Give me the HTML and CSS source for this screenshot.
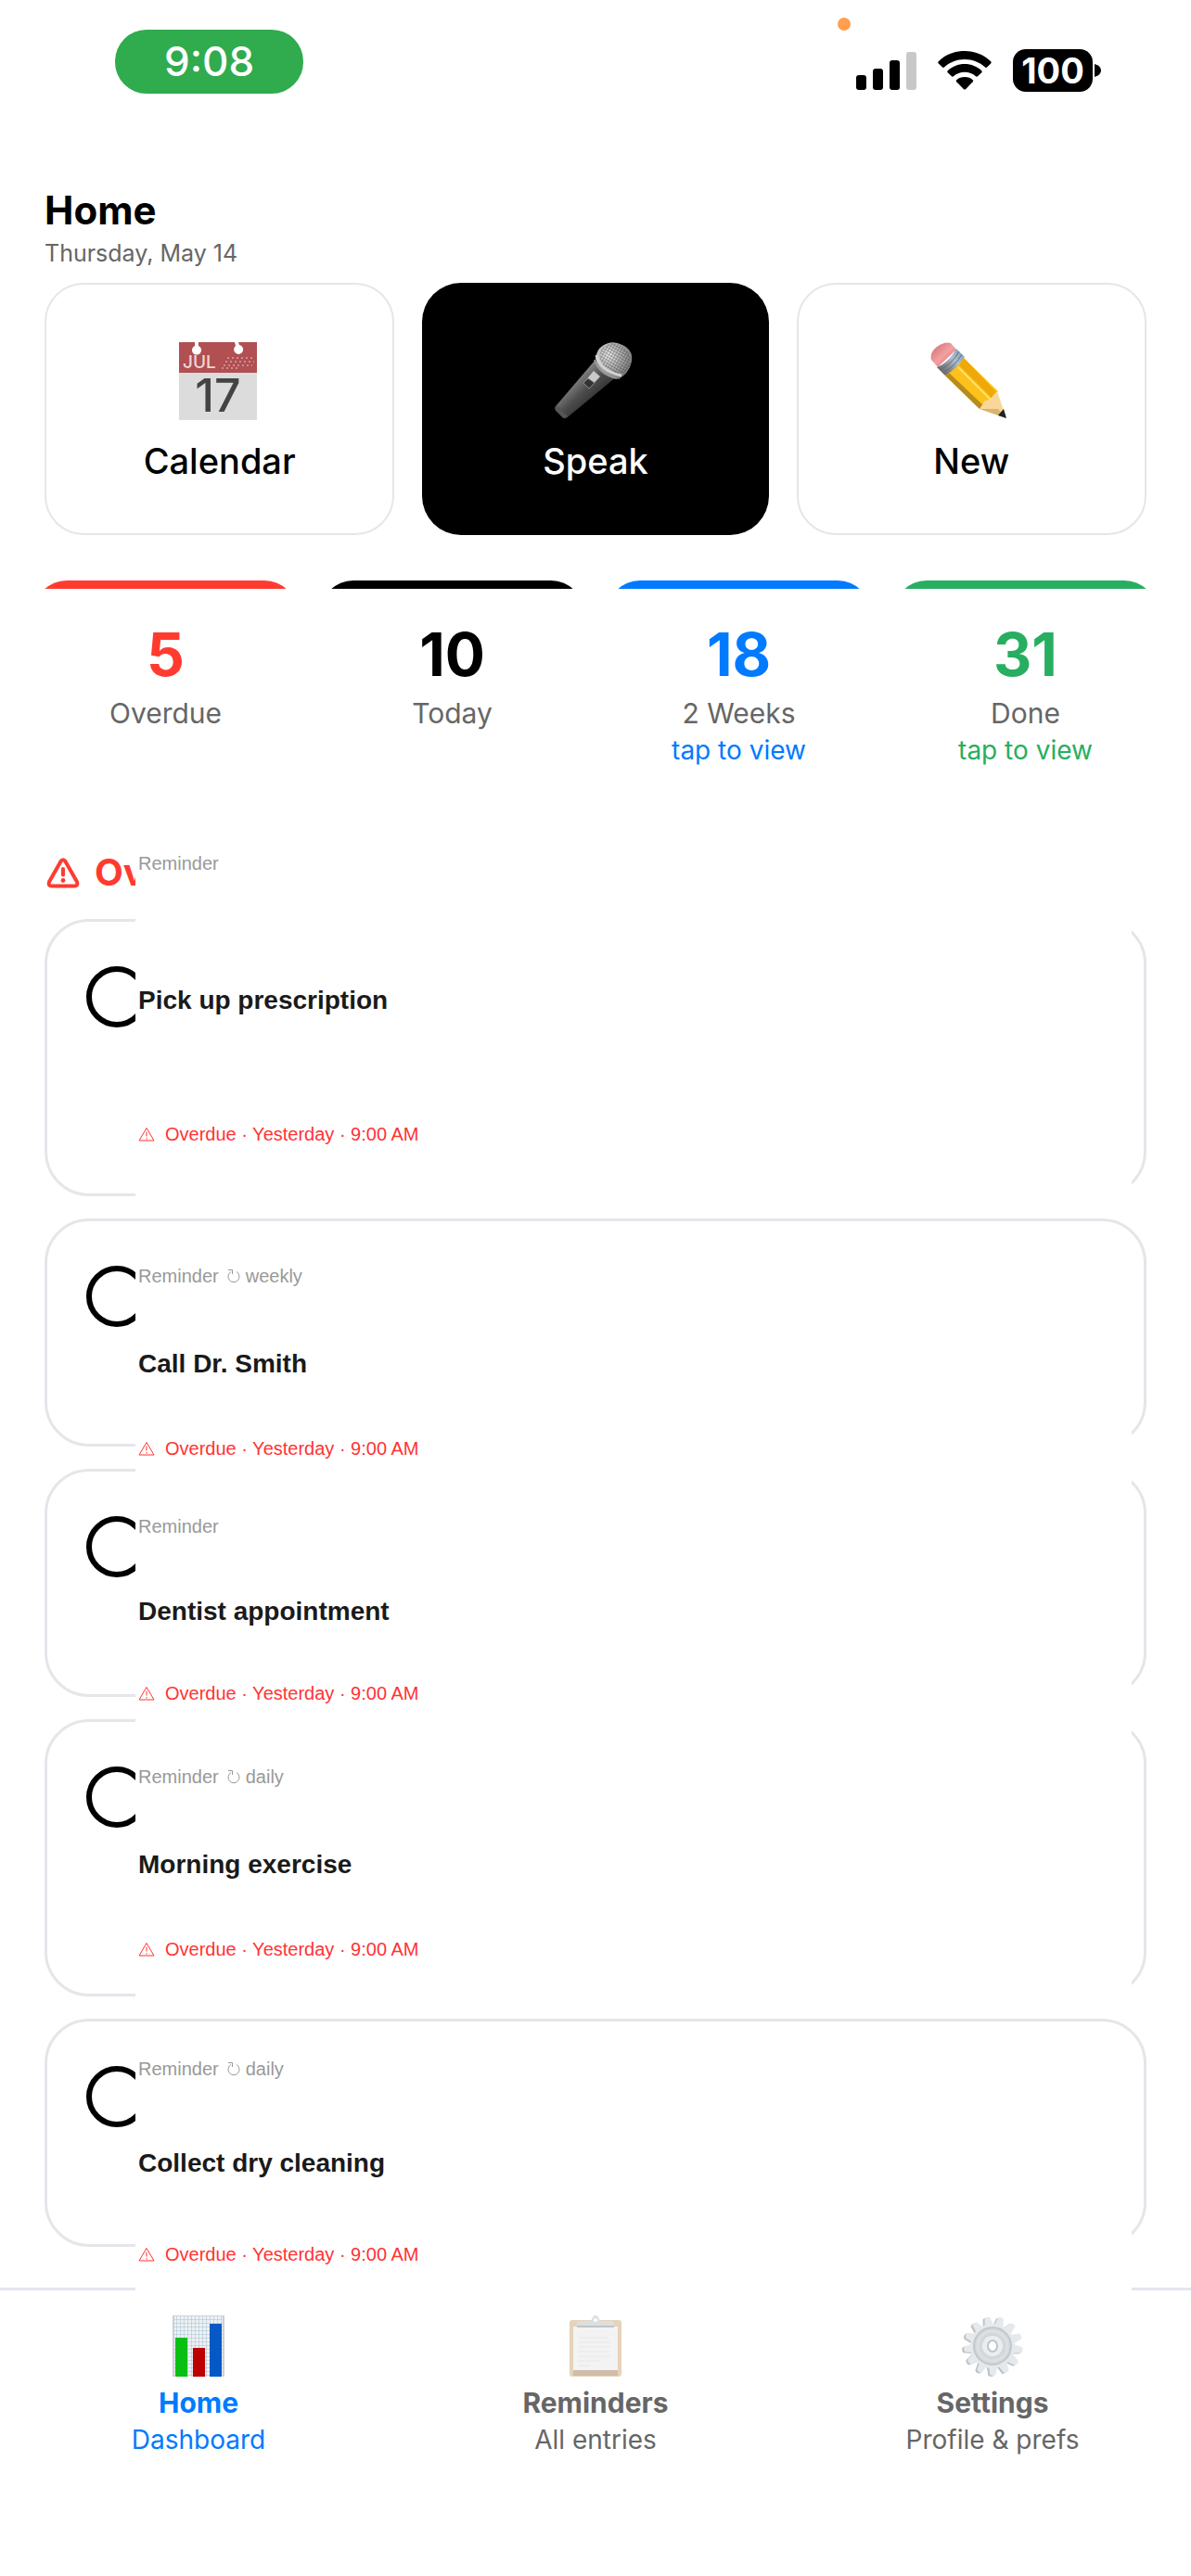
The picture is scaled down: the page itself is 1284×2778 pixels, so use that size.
FILE: index.html
```html
<!DOCTYPE html>
<html lang="en">
<head>
    <meta charset="UTF-8">
    <meta name="viewport" content="width=device-width, initial-scale=1.0">
    <title>Home</title>
    <link rel="stylesheet" href="styles.css">
</head>
<body>
    <header class="status-bar">
        <div class="clock">9:08</div>
        <div class="status-icons">
            <span class="mic-dot"></span>
            <svg width="65" height="42" viewBox="0 0 65 42">
                <rect x="0" y="26" width="11" height="16" rx="3"/>
                <rect x="18" y="19" width="11" height="23" rx="3"/>
                <rect x="36" y="10" width="11" height="32" rx="3"/>
                <rect x="54" y="1" width="11" height="41" rx="3" fill="#c8c8c8"/>
            </svg>
            <svg width="58" height="42" viewBox="0 0 58 42">
                <path d="M29 0C18 0 8 4 .8 11.200Q-.2 12.300.8 13.400L5 17.500Q6 18.400 7 17.500C13 12 20.500 9 29 9S45 12 51 17.500Q52 18.400 53 17.500L57.200 13.400Q58.200 12.300 57.200 11.200C50 4 40 0 29 0Z"/>
                <path d="M29 14C22 14 15.500 16.700 10.700 21.200Q9.700 22.200 10.700 23.200L15 27.300Q16 28.200 17 27.300C20.200 24.500 24.400 22.800 29 22.800S37.800 24.500 41 27.300Q42 28.200 43 27.300L47.300 23.200Q48.300 22.200 47.300 21.200C42.500 16.700 36 14 29 14Z"/>
                <path d="M29 28C25.500 28 22.500 29.200 20.300 31.200Q19.400 32.200 20.300 33.200L28 41.200Q29 42 30 41.200L37.700 33.200Q38.600 32.200 37.700 31.200C35.500 29.200 32.500 28 29 28Z"/>
            </svg>
            <div class="battery">
                <span class="battery-level">100</span>
                <svg width="7" height="14" viewBox="0 0 7 14"><path d="M0 0Q7 2 7 7T0 14Z"/></svg>
            </div>
        </div>
    </header>

    <main>
        <h1>Home</h1>
        <p class="date">Thursday, May 14</p>

        <div class="actions">
            <button class="action">
                <svg width="88" height="84" viewBox="0 0 88 84">
                    <rect width="84" height="84" fill="#dcdcdc"/>
                    <rect width="84" height="33" fill="#b14f52"/>
                    <path d="M17 0h4v4a5 5 0 1 1-4 0ZM60 0h4l1 3a5 5 0 1 1-4 1Z" fill="#fff"/>
                    <text x="4" y="28" class="cal-month">JUL</text>
                    <path d="M52 17h29M50 21h31M48 25h31M46 28h18" stroke="#d08c8e" stroke-width="2" stroke-dasharray="2 3"/>
                    <text x="42" y="75" text-anchor="middle" class="cal-day">17</text>
                </svg>
                <span>Calendar</span>
            </button>
            <button class="action action-primary">
                <svg width="88" height="84" viewBox="0 0 88 84">
                    <defs>
                        <linearGradient id="mic-body" x1="0" y1="0" x2="1" y2="1">
                            <stop offset="0.300" stop-color="#8a8a8a"/>
                            <stop offset="0.500" stop-color="#4c4c4c"/>
                            <stop offset="0.800" stop-color="#1e1e1e"/>
                        </linearGradient>
                        <radialGradient id="mic-head" cx="0.350" cy="0.350" r="0.700">
                            <stop offset="0" stop-color="#f0f0f0"/>
                            <stop offset="1" stop-color="#777"/>
                        </radialGradient>
                        <pattern id="mic-mesh" width="3" height="3" patternUnits="userSpaceOnUse" patternTransform="rotate(30)">
                            <path d="M0 0h3M0 0v3" stroke="#333" stroke-width="1"/>
                        </pattern>
                    </defs>
                    <path d="M43 20 67 37 15 80Q11 84 8 81L1 73Q-1 71 2 68Z" fill="url(#mic-body)"/>
                    <path d="M2 68 14 80 10 82 1 74Z" fill="#555"/>
                    <path d="M48 7Q59-4 73 3T82 24Q80 33 69 40Q48 34 44 18Q45 11 48 7Z" fill="url(#mic-head)"/>
                    <path d="M50 8Q60-3 72 4T81 23Q80 31 70 37Q52 30 48 16Z" fill="url(#mic-mesh)" opacity="0.700"/>
                    <path d="M45 14Q49 31 72 36" fill="none" stroke="#d2d2d2" stroke-width="3"/>
                    <path d="M43 19Q48 35 67 39" fill="none" stroke="#999" stroke-width="2"/>
                    <path d="M42 31 49 37 37 50 31 44Z" fill="#c9c9c9"/>
                    <path d="M36 39 43 44 37 50 31 44Z" fill="#333" stroke="#888"/>
                </svg>
                <span>Speak</span>
            </button>
            <button class="action">
                <svg width="88" height="84" viewBox="0 0 88 84">
                    <defs>
                        <linearGradient id="pencil-metal" x1="0" y1="1" x2="1" y2="0">
                            <stop offset="0" stop-color="#4b4e54"/>
                            <stop offset="0.400" stop-color="#8e939a"/>
                            <stop offset="0.600" stop-color="#a9c0d6"/>
                            <stop offset="1" stop-color="#7c93aa"/>
                        </linearGradient>
                        <linearGradient id="pencil-rubber" x1="0" y1="0" x2="1" y2="1">
                            <stop offset="0" stop-color="#c9686c"/>
                            <stop offset="0.500" stop-color="#f3a0a2"/>
                            <stop offset="1" stop-color="#d4686e"/>
                        </linearGradient>
                    </defs>
                    <path d="M8 27 1 19Q-1 11 7 5T22 1L28 8Z" fill="url(#pencil-rubber)"/>
                    <path d="M7 27Q20 22 28 7L37 16Q30 29 16 36Z" fill="url(#pencil-metal)"/>
                    <path d="M10 30Q23 24 31 10M13 33Q26 27 34 13" fill="none" stroke="#666c74"/>
                    <path d="M16 36Q29 28 36 17L73 53 60 66 53 72Z" fill="#fcc21b"/>
                    <path d="M31 25 66 60 71 54 36 17Z" fill="#f0a808"/>
                    <path d="M30 27 65 62" stroke="#ffe26a" stroke-width="2"/>
                    <path d="M16 36 20 33 58 69 53 72Z" fill="#b98a1c"/>
                    <path d="M53 72 59 63 65 62 68 57 72 53 82 82Z" fill="#f9d79a"/>
                    <path d="M53 72 82 82 73 72Z" fill="#d9b274"/>
                    <path d="M79 72 82 82 73 79Z" fill="#222"/>
                </svg>
                <span>New</span>
            </button>
        </div>

        <div class="summary">
            <a href="#overdue" class="stat stat-red">
                <strong>5</strong>
                <span class="stat-label">Overdue</span>
            </a>
            <a href="#today" class="stat stat-black">
                <strong>10</strong>
                <span class="stat-label">Today</span>
            </a>
            <a href="#weeks" class="stat stat-blue">
                <strong>18</strong>
                <span class="stat-label">2 Weeks</span>
                <span class="stat-hint">tap to view</span>
            </a>
            <a href="#done" class="stat stat-green">
                <strong>31</strong>
                <span class="stat-label">Done</span>
                <span class="stat-hint">tap to view</span>
            </a>
        </div>

        <svg class="symbols" width="0" height="0">
            <symbol id="warning" viewBox="0 0 18 16">
                <path d="M9 1.500 17 15H1ZM9 5.500v5M9 12v1.500" fill="none" stroke="currentColor"/>
            </symbol>
            <symbol id="repeat" viewBox="0 0 14 16">
                <path d="M4 3.500A6 6 0 1 0 10 3.500M1 1.500H5.500V6" fill="none" stroke="currentColor"/>
            </symbol>
        </svg>

        <h2 id="overdue">
            <svg width="36" height="33" viewBox="0 0 36 33">
                <path d="M15.500 4Q18 .5 20.500 4L33 26Q34.500 30.500 30 30.500H6Q1.500 30.500 3 26Z" fill="none" stroke="currentColor" stroke-width="4" stroke-linejoin="round"/>
                <path d="M18 12v6.500" stroke="currentColor" stroke-width="4" stroke-linecap="round"/>
                <circle cx="18" cy="24.500" r="2.400" fill="currentColor"/>
            </svg>
            Overdue
        </h2>

        <ul class="cards">
            <li class="card card-tall">
                <input type="checkbox" id="task-1" class="check">
                <div class="details details-raised">
                    <p class="kind">Reminder</p>
                    <label for="task-1">Pick up prescription</label>
                    <p class="due"><svg width="18" height="16"><use href="#warning"/></svg>Overdue · Yesterday · 9:00 AM</p>
                </div>
            </li>
            <li class="card">
                <input type="checkbox" id="task-2" class="check">
                <div class="details">
                    <p class="kind">Reminder <svg width="14" height="16"><use href="#repeat"/></svg>weekly</p>
                    <label for="task-2">Call Dr. Smith</label>
                    <p class="due"><svg width="18" height="16"><use href="#warning"/></svg>Overdue · Yesterday · 9:00 AM</p>
                </div>
            </li>
            <li class="card">
                <input type="checkbox" id="task-3" class="check">
                <div class="details details-compact">
                    <p class="kind">Reminder</p>
                    <label for="task-3">Dentist appointment</label>
                    <p class="due"><svg width="18" height="16"><use href="#warning"/></svg>Overdue · Yesterday · 9:00 AM</p>
                </div>
            </li>
            <li class="card card-tall">
                <input type="checkbox" id="task-4" class="check">
                <div class="details">
                    <p class="kind">Reminder <svg width="14" height="16"><use href="#repeat"/></svg>daily</p>
                    <label for="task-4">Morning exercise</label>
                    <p class="due"><svg width="18" height="16"><use href="#warning"/></svg>Overdue · Yesterday · 9:00 AM</p>
                </div>
            </li>
            <li class="card">
                <input type="checkbox" id="task-5" class="check">
                <div class="details details-spread">
                    <p class="kind">Reminder <svg width="14" height="16"><use href="#repeat"/></svg>daily</p>
                    <label for="task-5">Collect dry cleaning</label>
                    <p class="due"><svg width="18" height="16"><use href="#warning"/></svg>Overdue · Yesterday · 9:00 AM</p>
                </div>
            </li>
        </ul>
    </main>

    <nav class="tabs">
        <a href="#home" class="tab tab-active">
            <svg width="56" height="66" viewBox="0 0 56 66">
                <defs>
                    <pattern id="grid-paper" width="4" height="4" patternUnits="userSpaceOnUse">
                        <path d="M0 0h4M0 0v4" stroke="#b9cedd" stroke-width="1.500"/>
                    </pattern>
                </defs>
                <rect width="56" height="66" fill="#eef1f4"/>
                <rect width="56" height="66" fill="url(#grid-paper)"/>
                <path d="M1 0v66M55 0v66" stroke="#ccd0d4" stroke-width="2"/>
                <rect x="3" y="24" width="13" height="42" fill="#0abf14"/>
                <rect x="22" y="35" width="13" height="31" fill="#bd0000"/>
                <rect x="40" y="9" width="13" height="57" fill="#0459c4"/>
            </svg>
            <strong>Home</strong>
            <span>Dashboard</span>
        </a>
        <a href="#reminders" class="tab">
            <svg width="56" height="66" viewBox="0 0 56 66">
                <rect y="5" width="56" height="61" rx="3" fill="#e6d3bb"/>
                <rect x="4" y="59" width="48" height="6" fill="#cfbcab"/>
                <rect x="4" y="12" width="48" height="47" fill="#f3f3f3"/>
                <path d="M10 24h32M10 29h34M10 34h34M10 39h32M10 44h34M10 49h24M10 54h12" stroke="#e6e7e8" stroke-width="1"/>
                <path d="M8 13V9Q8 6 11 6H22Q24 5 24.500 3 25.500 0 28 0T31.500 3Q32 5 34 6H45Q48 6 48 9V13Z" fill="#dcdfe0"/>
                <path d="M8 12h40" stroke="#c2c5c6" stroke-width="2"/>
                <circle cx="28" cy="5" r="2" fill="#fff"/>
            </svg>
            <strong>Reminders</strong>
            <span>All entries</span>
        </a>
        <a href="#settings" class="tab">
            <svg width="66" height="66" viewBox="0 0 66 66">
                <defs>
                    <path id="tooth" d="M28 12 30 2Q33 0 36 2L38 12Z"/>
                    <g id="teeth">
                        <use href="#tooth" transform="rotate(15 33 33)"/>
                        <use href="#tooth" transform="rotate(43 33 33)"/>
                        <use href="#tooth" transform="rotate(70 33 33)"/>
                        <use href="#tooth" transform="rotate(98 33 33)"/>
                        <use href="#tooth" transform="rotate(126 33 33)"/>
                        <use href="#tooth" transform="rotate(153 33 33)"/>
                        <use href="#tooth" transform="rotate(181 33 33)"/>
                        <use href="#tooth" transform="rotate(209 33 33)"/>
                        <use href="#tooth" transform="rotate(237 33 33)"/>
                        <use href="#tooth" transform="rotate(264 33 33)"/>
                        <use href="#tooth" transform="rotate(292 33 33)"/>
                        <use href="#tooth" transform="rotate(320 33 33)"/>
                        <use href="#tooth" transform="rotate(348 33 33)"/>
                    </g>
                </defs>
                <use href="#teeth" x="-1" y="1" fill="#bfc2c5"/>
                <use href="#teeth" x="1" fill="#e6e9ec"/>
                <circle cx="33" cy="33" r="24" fill="#e6e9ec"/>
                <circle cx="33" cy="33" r="20" fill="#d3d7da" stroke="#c3c8cb" stroke-width="2"/>
                <circle cx="33" cy="33" r="16" fill="none" stroke="#dde0e3" stroke-width="3"/>
                <circle cx="33" cy="33" r="11" fill="#ebedef"/>
                <ellipse cx="33" cy="33" rx="5" ry="6" fill="#fff" stroke="#bfc4c8" stroke-width="2"/>
            </svg>
            <strong>Settings</strong>
            <span>Profile &amp; prefs</span>
        </a>
    </nav>
</body>
</html>
```

FILE: styles.css
```css
* {
    box-sizing: border-box;
}

body {
    margin: 0;
    background-color: #fff;
    font-family: Inter, sans-serif;
    color: #000;
}

h1, h2, p, ul {
    margin: 0;
    padding: 0;
}

a {
    color: inherit;
    text-decoration: none;
}

svg {
    flex-shrink: 0;
    overflow: visible;
}

/* status bar */

.status-bar {
    display: flex;
    justify-content: space-between;
    align-items: flex-end;
    padding: 32px 97px 0 124px;
}

.clock {
    padding: 0 53px;
    border-radius: 34px;
    background-color: #30ab4e;
    color: #fff;
    font-size: 44px;
    font-weight: 500;
    line-height: 69px;
}

.status-icons {
    position: relative;
    display: flex;
    align-items: center;
    gap: 23px;
    height: 50px;
}

.mic-dot {
    position: absolute;
    top: -32px;
    left: -20px;
    width: 14px;
    height: 14px;
    border-radius: 50%;
    background-color: #ff9f4f;
}

.battery {
    display: flex;
    align-items: center;
    gap: 2px;
}

.battery-level {
    width: 86px;
    border-radius: 14px;
    background-color: #000;
    color: #fff;
    font-size: 38px;
    font-weight: 700;
    line-height: 46px;
    text-align: center;
}

/* page */

main {
    padding: 102px 48px 44px;
}

h1 {
    font-size: 42px;
    line-height: 48px;
}

.date {
    margin-top: 6px;
    color: #666;
    font-size: 25px;
    line-height: 32px;
}

.actions {
    display: flex;
    gap: 30px;
    margin-top: 16px;
}

.action {
    flex: 1;
    display: flex;
    flex-direction: column;
    align-items: center;
    justify-content: center;
    gap: 20px;
    padding: 62px 0 54px;
    border: 2px solid #e6e6e8;
    border-radius: 42px;
    background-color: #fff;
    color: #000;
    font-family: inherit;
    font-size: 38px;
    font-weight: 500;
    line-height: 48px;
}

.action-primary {
    border: none;
    background-color: #000;
    color: #fff;
}

.cal-month {
    fill: #f0d6d6;
    font-size: 19px;
}

.cal-day {
    fill: #444;
    font-size: 50px;
}

.summary {
    display: grid;
    grid-template-columns: repeat(4, 1fr);
    gap: 48px;
    margin-top: 49px;
}

.stat {
    display: flex;
    flex-direction: column;
    align-items: center;
}

/* coloured cap along the rounded top of the tile */
.stat::before {
    content: "";
    align-self: stretch;
    height: 37px;
    margin: 0 -12px;
    border-radius: 36px 36px 0 0;
    background-image: linear-gradient(currentColor 9px, transparent 9px);
}

.stat strong {
    font-size: 64px;
    line-height: 86px;
}

.stat-label {
    color: #666;
    font-size: 30px;
    line-height: 40px;
}

.stat-hint {
    font-size: 28px;
    line-height: 40px;
}

.stat-red {
    color: #ff3b30;
}

.stat-black {
    color: #000;
}

.stat-blue {
    color: #007aff;
}

.stat-green {
    color: #27ae60;
}

.symbols {
    display: block;
}

h2 {
    display: flex;
    align-items: center;
    gap: 16px;
    margin: 88px 0 26px;
    padding-left: 2px;
    color: #ff3b30;
    font-size: 40px;
    line-height: 48px;
}

/* reminder cards */

.cards {
    display: grid;
    gap: 24px;
    list-style: none;
}

.card {
    position: relative;
    min-height: 246px;
    padding: 48px 42px;
    border: 3px solid #e5e5ea;
    border-radius: 48px;
}

.card-tall {
    min-height: 299px;
}

.check {
    appearance: none;
    display: block;
    width: 66px;
    height: 66px;
    margin: 0;
    border: 6px solid #000;
    border-radius: 50%;
}

/* opaque text layer that lies over the card and its neighbours */
.details {
    position: absolute;
    z-index: 1;
    top: 31px;
    left: 95px;
    right: 13px;
    display: flex;
    flex-direction: column;
    gap: 63px;
    padding: 16px 3px 60px;
    background-color: #fff;
    font-family: "Liberation Sans", Arial, sans-serif;
    font-size: 20px;
    line-height: 24px;
}

.details-raised {
    top: -91px;
    gap: 116px;
}

.details-compact {
    gap: 60px;
}

.details-spread {
    top: 23px;
    gap: 70px;
}

.kind {
    display: flex;
    align-items: center;
    color: #999;
}

.kind svg {
    margin: 0 6px 0 9px;
}

.details label {
    padding-top: 4px;
    color: #1a1a1a;
    font-size: 28px;
    font-weight: 700;
    line-height: 32px;
}

.due {
    display: flex;
    align-items: center;
    gap: 11px;
    color: #ff3333;
}

/* tab bar */

.tabs {
    display: flex;
    padding: 27px 0 130px;
    border-top: 3px solid #e5e5ee;
}

.tab {
    position: relative;
    z-index: 2;
    flex: 1;
    display: flex;
    flex-direction: column;
    align-items: center;
    color: #666;
    font-size: 28px;
    line-height: 40px;
}

.tab svg {
    margin-bottom: 8px;
}

.tab strong {
    font-size: 30px;
}

.tab-active {
    color: #007aff;
}
```
